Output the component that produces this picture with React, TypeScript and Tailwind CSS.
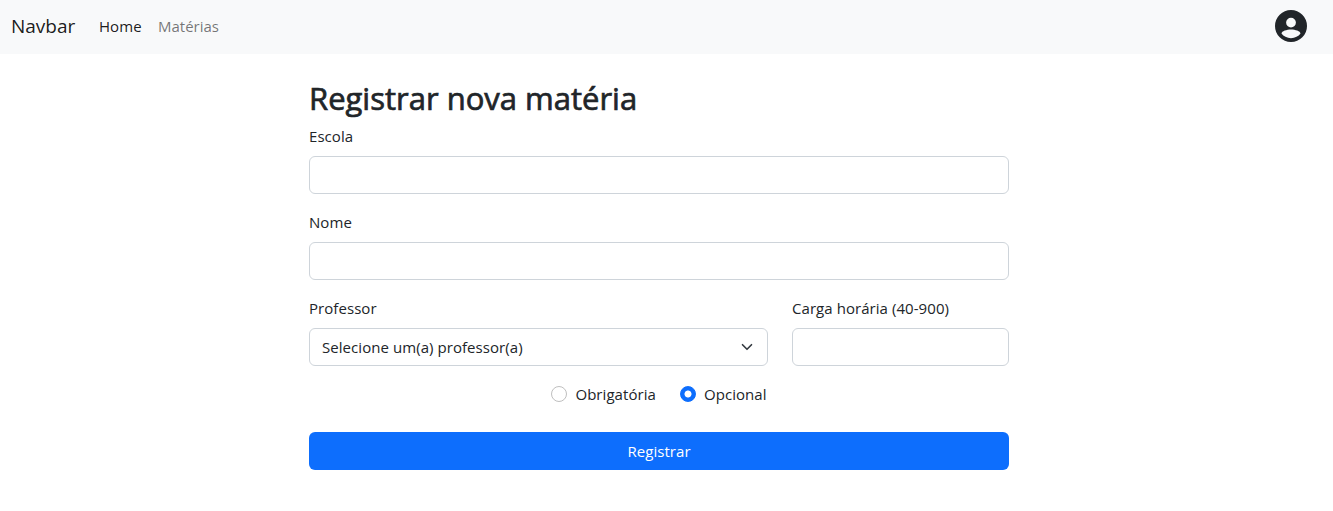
import { useState } from 'react';
import type { ReactNode } from 'react';

const control =
  'block h-[38px] w-full rounded-md border border-[#ced4da] bg-white px-3 outline-none focus:border-[#86b7fe]';

function Field({ id, label, children }: { id: string; label: string; children: ReactNode }) {
  return (
    <div>
      <label htmlFor={id} className="mb-2 block h-6 w-max">
        {label}
      </label>
      {children}
    </div>
  );
}

function Radio({ label, checked, onSelect }: { label: string; checked: boolean; onSelect: () => void }) {
  return (
    <label className="flex h-6 items-center gap-2">
      <input
        type="radio"
        name="tipo"
        checked={checked}
        onChange={onSelect}
        className="size-4 appearance-none rounded-full border border-[#bfbfbf] bg-white checked:border-[#0d6efd] checked:bg-[radial-gradient(circle,white_3.1px,#0d6efd_3.9px)]"
      />
      <span>{label}</span>
    </label>
  );
}

function UserIcon() {
  return (
    <svg viewBox="0 0 32 32" className="size-8 text-[#212529]" fill="currentColor" aria-hidden="true">
      <path
        fillRule="evenodd"
        d="M16 0a16 16 0 1 0 0 32a16 16 0 1 0 0-32zM16 7.7a4.9 4.9 0 1 1 0 9.8a4.9 4.9 0 1 1 0-9.8zM16 28.2c-4 0-7.5-1.8-9.5-4.6c.05-2.4 5.3-4 9.5-4s9.45 1.6 9.5 4c-2 2.8-5.5 4.6-9.5 4.6z"
      />
    </svg>
  );
}

export default function App() {
  const [type, setType] = useState('opcional');
  return (
    <div className="min-h-[511px] bg-white font-['Open_Sans',sans-serif] text-[15px] leading-6 tracking-[0.06px] text-[#212529]">
      <nav className="flex h-[54px] items-center bg-[#f8f9fa] pr-[26px] pb-0.5 pl-[11px]">
        <a className="w-[88px] text-[19px] leading-[30px] tracking-normal text-black/90">Navbar</a>
        <a className="w-[59px] text-black/90">Home</a>
        <a className="tracking-normal text-black/55">Matérias</a>
        <a className="ml-auto">
          <UserIcon />
        </a>
      </nav>
      <main className="ml-[309px] w-[700px] pt-[25px]">
        <h1 className="mb-[7px] text-[31px] leading-[38px] font-normal tracking-normal whitespace-nowrap [-webkit-text-stroke:0.7px_#212529]">
          Registrar nova matéria
        </h1>
        <form className="flex flex-col gap-4" onSubmit={(e) => e.preventDefault()}>
          <Field id="escola" label="Escola">
            <input id="escola" className={control} />
          </Field>
          <Field id="nome" label="Nome">
            <input id="nome" className={control} />
          </Field>
          <div className="grid grid-cols-[459px_217px] gap-6">
            <Field id="professor" label="Professor">
              <button id="professor" type="button" className={`${control} text-left`}>
                <span className="flex items-center justify-between">
                  <span>Selecione um(a) professor(a)</span>
                  <svg viewBox="0 0 16 16" className="h-3 w-4" fill="none" stroke="#343a40" strokeWidth="2.2" strokeLinecap="round" strokeLinejoin="round">
                    <path d="m2 5 6 6 6-6" />
                  </svg>
                </span>
              </button>
            </Field>
            <Field id="carga" label="Carga horária (40-900)">
              <input id="carga" className={control} />
            </Field>
          </div>
          <div className="flex justify-center gap-6">
            <Radio label="Obrigatória" checked={type === 'obrigatoria'} onSelect={() => setType('obrigatoria')} />
            <Radio label="Opcional" checked={type === 'opcional'} onSelect={() => setType('opcional')} />
          </div>
          <button type="submit" className="mt-[10px] h-[38px] rounded-md bg-[#0d6efd] text-white">
            Registrar
          </button>
        </form>
      </main>
    </div>
  );
}
